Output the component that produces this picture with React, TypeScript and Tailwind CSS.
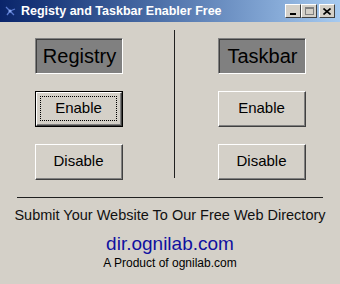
import React from 'react';

const font = { fontFamily: '"Liberation Sans", Arial, sans-serif' };

const Raised: React.FC<{ label: string; focused?: boolean }> = ({ label, focused }) => (
  <div
    className={`w-[88px] h-[36px] flex ${
      focused ? 'border border-black' : ''
    }`}
  >
    <div className="flex-1 flex border-t border-l border-white border-r border-b border-r-[#404040] border-b-[#404040] bg-[#d4d0c8]">
      <div className="flex-1 flex border-r border-b border-[#808080] items-center justify-center p-[3px]">
        <div
          className={`flex-1 self-stretch flex items-center justify-center text-[15px] text-black ${
            focused ? 'border border-dotted border-black' : ''
          }`}
        >
          {label}
        </div>
      </div>
    </div>
  </div>
);

const Sunken: React.FC<{ label: string }> = ({ label }) => (
  <div className="w-[88px] h-[36px] flex border-t border-l border-[#808080] border-r border-b border-r-white border-b-white">
    <div className="flex-1 flex items-center justify-center bg-[#808080] border-t border-l border-[#404040] text-[20px] text-black pb-[2px]">
      {label}
    </div>
  </div>
);

const TitleButton: React.FC<{ children: React.ReactNode; className?: string }> = ({ children, className }) => (
  <div
    className={`w-[16px] h-[14px] bg-[#d4d0c8] border-t border-l border-white border-r border-b border-r-[#404040] border-b-[#404040] flex items-center justify-center ${className ?? ''}`}
  >
    {children}
  </div>
);

export default function App() {
  return (
    <div className="w-[340px] h-[284px] bg-[#d4d0c8] flex flex-col overflow-hidden" style={font}>
      {/* title bar */}
      <div className="h-[22px] flex items-center bg-gradient-to-r from-[#0a246a] to-[#a6caf0] pl-[4px] pr-[5px]">
        <svg width="14" height="14" viewBox="0 0 14 14" className="mr-[3px]">
          <path d="M2 3 L6 7 L3 11 M6 7 L11 5 M6 7 L10 11" stroke="#5a7ad0" strokeWidth="1.3" fill="none" />
          <circle cx="6" cy="7" r="1.5" fill="#8aa8f0" />
        </svg>
        <span className="text-white font-bold text-[12.5px]">Registy and Taskbar Enabler Free</span>
        <div className="ml-auto flex items-center">
          <TitleButton>
            <div className="w-[6px] h-[2px] bg-black mt-[6px] -ml-[1px]" />
          </TitleButton>
          <TitleButton>
            <div className="w-[9px] h-[8px] border border-[#808080] border-t-2" />
          </TitleButton>
          <TitleButton className="ml-[2px]">
            <svg width="8" height="7" viewBox="0 0 8 7">
              <path d="M0.5 0.5 L7.5 6.5 M7.5 0.5 L0.5 6.5" stroke="black" strokeWidth="1.6" />
            </svg>
          </TitleButton>
        </div>
      </div>

      {/* two columns */}
      <div className="flex pl-[35px] pt-[8px]">
        <div className="flex flex-col pt-[8px] gap-[17px]">
          <Sunken label="Registry" />
          <Raised label="Enable" focused />
          <Raised label="Disable" />
        </div>
        <div className="ml-[51px] w-[1px] h-[148px] bg-[#202020]" />
        <div className="ml-[43px] flex flex-col pt-[8px] gap-[17px]">
          <Sunken label="Taskbar" />
          <Raised label="Enable" />
          <Raised label="Disable" />
        </div>
      </div>

      {/* footer */}
      <div className="mt-[17px] mx-[17px] h-[1px] bg-[#202020]" />
      <div className="mt-[9px] text-center text-[14.5px] text-[#111] leading-[16px] whitespace-nowrap">
        Submit Your Website To Our Free Web Directory
      </div>
      <div className="mt-[10px] text-center text-[19px] text-[#1010a0] leading-[22px]">dir.ognilab.com</div>
      <div className="mt-[1px] text-center text-[12px] text-black leading-[14px]">A Product of ognilab.com</div>
    </div>
  );
}
